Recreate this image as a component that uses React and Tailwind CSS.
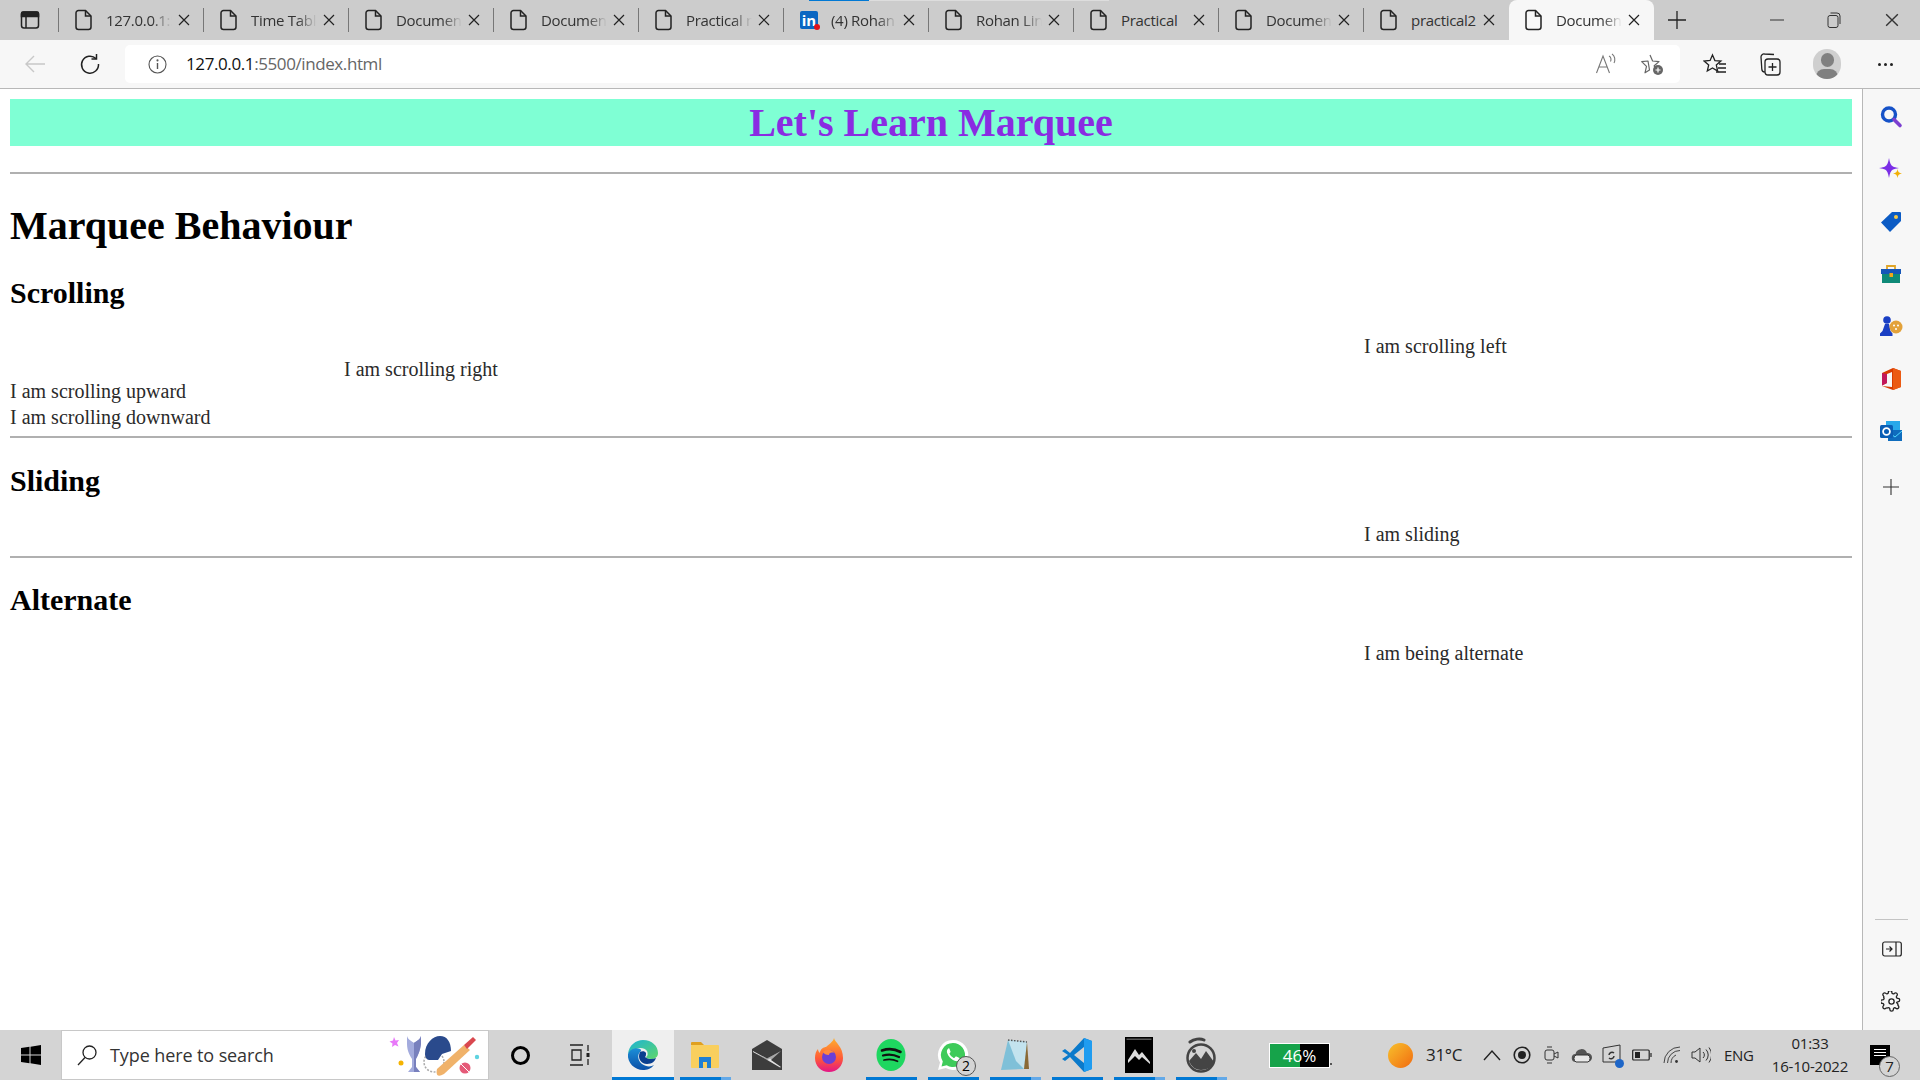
import React from 'react';

const tabs = [
  { title: '127.0.0.1:5500' },
  { title: 'Time Table' },
  { title: 'Document' },
  { title: 'Document' },
  { title: 'Practical no' },
  { title: '(4) Rohan Lin', linkedin: true },
  { title: 'Rohan Linkedin' },
  { title: 'Practical', full: true },
  { title: 'Document' },
  { title: 'practical2', full: true },
];

const PageIcon = () => (
  <svg width="18" height="22" viewBox="0 0 18 22" fill="none" stroke="#222" strokeWidth="1.5" className="shrink-0">
    <path d="M3.5 1.5h7l5.5 5.5v11a2.5 2.5 0 0 1-2.5 2.500h-10a2.5 2.5 0 0 1-2.5-2.500v-14a2.5 2.5 0 0 1 2.5-2.500z" />
    <path d="M10.5 1.5v5.5h5.5" />
  </svg>
);

const LinkedinIcon = () => (
  <div className="relative w-[18px] h-[18px] bg-[#0a66c2] rounded-[2px] shrink-0 flex items-end justify-center">
    <span className="text-white font-bold text-[15px] leading-[17px]">in</span>
    <span className="absolute -right-[2px] -bottom-[1px] w-[6px] h-[6px] rounded-full bg-[#e0101a]" />
  </div>
);

const CloseX = ({ size = 12, color = '#222' }) => (
  <svg width={size} height={size} viewBox="0 0 12 12" stroke={color} strokeWidth="1.2" className="shrink-0">
    <path d="M1 1l10 10M11 1L1 11" />
  </svg>
);

const Tab = ({ tab, active, last }) => (
  <div className={`relative w-[145px] h-[40px] flex items-center pl-[16px] ${active ? 'bg-[#f7f7f7] rounded-t-[8px]' : ''}`}>
    {tab.linkedin ? <LinkedinIcon /> : <PageIcon />}
    <div className={`ml-[13px] w-[66px] overflow-hidden whitespace-nowrap text-[15px] tracking-[-0.3px] text-[#333] ${tab.full ? '' : '[mask-image:linear-gradient(to_right,black_70%,transparent)]'}`}>
      {tab.title}
    </div>
    <div className="ml-[6px]"><CloseX /></div>
    {!active && !last && <div className="absolute right-0 top-[8px] h-[24px] w-px bg-[#777]" />}
  </div>
);

const TabBar = () => (
  <div className="relative h-[40px] bg-[#cccccc] flex items-center shrink-0">
    <div className="w-[59px] h-full relative flex items-center justify-center">
      <svg width="20" height="20" viewBox="0 0 20 20" fill="none" stroke="#222" strokeWidth="1.5" className="mr-[-1px]">
        <rect x="1.5" y="2" width="17" height="16" rx="2.5" />
        <path d="M1.5 3.5a1.5 1.5 0 0 1 1.5-1.5h14a1.5 1.5 0 0 1 1.5 1.5v3h-17z" fill="#222" />
        <path d="M6 6v12" />
      </svg>
      <div className="absolute right-0 top-[8px] h-[24px] w-px bg-[#777]" />
    </div>
    {tabs.map((t, i) => <Tab key={i} tab={t} last={i === tabs.length - 1} />)}
    <Tab tab={{ title: 'Document' }} active />
    <div className="ml-[13px]">
      <svg width="20" height="20" viewBox="0 0 20 20" stroke="#222" strokeWidth="1.3"><path d="M10 1v18M1 10h18" /></svg>
    </div>
    <div className="ml-auto flex items-center h-full">
      <div className="w-[57px] flex justify-center pr-[2px]"><svg width="14" height="14" viewBox="0 0 14 14" stroke="#333" strokeWidth="1"><path d="M0 7h14" /></svg></div>
      <div className="w-[57px] flex justify-center pr-[2px]">
        <svg width="14" height="16" viewBox="0 0 14 16" fill="none" stroke="#333" strokeWidth="1"><rect x="1" y="3.5" width="10" height="12" rx="2" /><path d="M3.5 1h6.5a3 3 0 0 1 3 3v8" /></svg>
      </div>
      <div className="w-[57px] flex justify-center"><CloseX size={14} color="#333" /></div>
    </div>
    {/* page load progress on the linkedin tab */}
    <div className="absolute left-[809px] top-0 h-[1px] w-[60px] bg-[#0078d4]" />
    <div className="absolute left-[869px] top-0 h-[1px] w-[240px] bg-[#dddddd]" />
  </div>
);

const ToolbarBtn = ({ w, children }) => (
  <div className="flex items-center justify-center shrink-0" style={{ width: w }}>{children}</div>
);

const Toolbar = () => (
  <div className="h-[49px] bg-[#f7f7f7] border-b border-[#b8b8b8] flex items-center shrink-0">
    <ToolbarBtn w={69}>
      <svg width="22" height="20" viewBox="0 0 22 20" fill="none" stroke="#c8c8c8" strokeWidth="1.4"><path d="M21 10H2M10 2l-8 8 8 8" /></svg>
    </ToolbarBtn>
    <ToolbarBtn w={42}>
      <svg width="22" height="22" viewBox="0 0 22 22" fill="none" stroke="#222" strokeWidth="1.5"><path d="M17 5.6A8.5 8.5 0 1 0 19.5 11" /><path d="M17.5 1v5h-5" /></svg>
    </ToolbarBtn>
    <div className="ml-[14px] flex-none w-[1555px] h-[38px] bg-white rounded-[5px] flex items-center">
      <div className="ml-[23px]">
        <svg width="19" height="19" viewBox="0 0 19 19" fill="none" stroke="#555" strokeWidth="1.1"><circle cx="9.5" cy="9.5" r="8.5" /><path d="M9.5 8v6" strokeWidth="1.4" /><circle cx="9.5" cy="5.4" r=".5" /></svg>
      </div>
      <div className="ml-[19px] text-[17px] tracking-[-0.4px] text-[#666]"><span className="text-[#111]">127.0.0.1</span>:5500/index.html</div>
      <div className="ml-auto flex items-center">
        <div className="w-[46px] flex justify-center">
          <svg width="22" height="22" viewBox="0 0 22 22" fill="none" stroke="#777" strokeWidth="1.1"><path d="M1.5 20L8 3l6.5 17M4 14h8" /><path d="M14 3c2 1 2.5 3.5 1.5 5.500M17 1c3 2 3.5 6 2 9" /></svg>
        </div>
        <div className="w-[46px] flex justify-center mr-[5px]">
          <svg width="24" height="24" viewBox="0 0 24 24" fill="none" stroke="#666" strokeWidth="1.2">
            <path d="M10 3l2.600 6 6.400.6-4.800 4.200 1 3.200M9.500 18l-4.500 2.800 1.500-6.400L1.700 9.600 8 9z" strokeLinejoin="round" />
            <circle cx="18" cy="18" r="5" fill="#666" stroke="none" />
            <path d="M18 15.500v5M15.500 18h5" stroke="#fff" />
          </svg>
        </div>
      </div>
    </div>
    <ToolbarBtn w={70}>
      <svg width="24" height="22" viewBox="0 0 24 22" fill="none" stroke="#222" strokeWidth="1.3"><path d="M9.5 2l2.400 5.600 6 .5-4.600 4 1.400 6-5.200-3.200L4.300 18l1.400-6-4.600-4 6-.5z" /><path d="M16 11h7M15 15h8M13 19h10" /></svg>
    </ToolbarBtn>
    <ToolbarBtn w={39}>
      <svg width="22" height="24" viewBox="0 0 22 24" fill="none" stroke="#222" strokeWidth="1.3"><rect x="6" y="7" width="15" height="16" rx="3" /><path d="M13.500 11v8M9.500 15h8" /><path d="M15 2.500 5.500 2A3 3 0 0 0 2 5l.8 12a3 3 0 0 0 3 3" /></svg>
    </ToolbarBtn>
    <ToolbarBtn w={76}>
      <div className="relative w-[28px] h-[30px] rounded-full bg-[#cfcfcf] overflow-hidden flex justify-center">
        <div className="absolute top-[4px] w-[13px] h-[14px] rounded-full bg-[#808080]" />
        <div className="absolute top-[20px] w-[22px] h-[16px] rounded-full bg-[#808080]" />
      </div>
    </ToolbarBtn>
    <ToolbarBtn w={40}>
      <div className="flex gap-[3px]">
        <span className="w-[3px] h-[3px] rounded-full bg-[#222]" />
        <span className="w-[3px] h-[3px] rounded-full bg-[#222]" />
        <span className="w-[3px] h-[3px] rounded-full bg-[#222]" />
      </div>
    </ToolbarBtn>
  </div>
);

const SideSlot = ({ children }) => (
  <div className="h-[52.3px] flex items-center justify-center shrink-0 pr-[1px]">{children}</div>
);

const Sidebar = () => (
  <div className="w-[58px] shrink-0 bg-[#f7f7f7] border-l border-[#b8b8b8] flex flex-col pt-[2px]">
    <SideSlot>
      <svg width="24" height="24" viewBox="0 0 24 24" fill="none"><circle cx="10" cy="9.5" r="6.5" stroke="#1652c8" strokeWidth="3.4" /><path d="M15 14.500l6 6" stroke="#7c3fd0" strokeWidth="3.6" strokeLinecap="round" /></svg>
    </SideSlot>
    <SideSlot>
      <svg width="24" height="24" viewBox="0 0 24 24"><path d="M10 1c.8 5 2 7.500 4 8.500 1 .5 3 1 6 1.500-3 .5-5 1-6 1.500-2 1-3.200 3.500-4 8.500-.8-5-2-7.500-4-8.500-1-.5-3-1-6-1.500 3-.5 5-1 6-1.500 2-1 3.200-3.500 4-8.500z" fill="#7b2ee6" /><path d="M18.500 12c.5 3 1.500 4 4.500 4.500-3 .5-4 1.500-4.500 4.500-.5-3-1.500-4-4.500-4.500 3-.5 4-1.500 4.500-4.500z" fill="#f2b006" /></svg>
    </SideSlot>
    <SideSlot>
      <svg width="22" height="22" viewBox="0 0 22 22"><path d="M12 1h8a1 1 0 0 1 1 1v8L10 21 1 11.500z" fill="#0b5bc4" /><circle cx="16" cy="6" r="2" fill="#f6c944" /></svg>
    </SideSlot>
    <SideSlot>
      <svg width="22" height="20" viewBox="0 0 22 20" fill="none"><path d="M7 5V2h8v3" stroke="#e0a528" strokeWidth="1.800" /><rect x="1" y="5" width="20" height="5" fill="#1657b8" /><rect x="2" y="10" width="18" height="9" fill="#0f8a78" /><rect x="9.500" y="9" width="3.500" height="4" fill="#f0a818" /></svg>
    </SideSlot>
    <SideSlot>
      <svg width="24" height="22" viewBox="0 0 24 22"><circle cx="8" cy="5" r="3.800" fill="#1a3fc4" /><path d="M6 9h4l1.500 7 2 2.500v2.500H1v-2.500l2.500-2.500z" fill="#1a3fc4" /><circle cx="17" cy="12" r="6.500" fill="#e3a23a" /><circle cx="15" cy="10.500" r="1" fill="#fff" /><circle cx="19" cy="10.500" r="1" fill="#fff" /><circle cx="17" cy="14" r="1" fill="#fff" /></svg>
    </SideSlot>
    <SideSlot>
      <svg width="22" height="24" viewBox="0 0 22 24"><path d="M13 1l8 3v16l-8 3-11-4 10 1V5L7 7v9l-5 2.500V6z" fill="#d83b01" /><path d="M2 6l5 1v9l-5 2.500z" fill="#c2185b" /><path d="M13 1l8 3v16l-8 3z" fill="#eb5a13" /></svg>
    </SideSlot>
    <SideSlot>
      <svg width="22" height="22" viewBox="0 0 22 22"><rect x="6" y="1" width="14" height="10" fill="#28a8ea" /><path d="M8 10h14v11H8z" fill="#0f6cbd" /><path d="M8 12l7 5 7-6" fill="none" stroke="#50d9ff" strokeWidth="1" /><rect x="0" y="5" width="13" height="13" rx="1.500" fill="#0a5eb5" /><circle cx="6.500" cy="11.500" r="3.400" fill="none" stroke="#fff" strokeWidth="1.800" /></svg>
    </SideSlot>
    <div className="h-[52.3px] flex items-center justify-center shrink-0 pr-[1px] mt-[4px]">
      <svg width="16" height="16" viewBox="0 0 16 16" stroke="#333" strokeWidth="1.100"><path d="M8 0v16M0 8h16" /></svg>
    </div>
    <div className="mt-auto mx-[12px] h-px bg-[#c4c4c4]" />
    <div className="h-[52px] flex items-center justify-center shrink-0 mt-[3px]">
      <svg width="20" height="16" viewBox="0 0 20 16" fill="none" stroke="#222" strokeWidth="1.200"><rect x=".7" y="1" width="18.600" height="14" rx="2" /><path d="M14 1v14" /><path d="M4 8h6M7.500 5.500 10 8l-2.500 2.500" /></svg>
    </div>
    <div className="h-[52px] flex items-center justify-center shrink-0 mb-[3px]">
      <svg width="21" height="21" viewBox="0 0 24 24" fill="none" stroke="#222" strokeWidth="1.500"><circle cx="12" cy="12" r="3" /><path d="M19.400 15a1.650 1.650 0 0 0 .33 1.820l.06.060a2 2 0 1 1-2.830 2.830l-.06-.060a1.650 1.650 0 0 0-2.800 1.170V21a2 2 0 0 1-4 0v-.090A1.650 1.650 0 0 0 7.400 19.400a1.650 1.650 0 0 0-1.820.330l-.060.060a2 2 0 1 1-2.830-2.830l.060-.060a1.650 1.650 0 0 0-1.170-2.800H1.500a2 2 0 0 1 0-4h.090A1.650 1.650 0 0 0 3.100 7.400a1.650 1.650 0 0 0-.330-1.820l-.060-.060a2 2 0 1 1 2.830-2.830l.060.060a1.650 1.650 0 0 0 2.800-1.170V1.500a2 2 0 0 1 4 0v.090a1.650 1.650 0 0 0 2.800 1.170l.060-.060a2 2 0 1 1 2.830 2.830l-.060.060a1.650 1.650 0 0 0 1.170 2.800h.2a2 2 0 0 1 0 4h-.090a1.650 1.650 0 0 0-1.510 1z" /></svg>
    </div>
  </div>
);

const Page = () => (
  <div className="flex-1 min-w-0 bg-white px-[10px] pt-[10px] text-black [font-family:'Liberation_Serif',serif]">
    <h1 className="h-[47px] bg-[#7fffd4] text-center text-[40px] leading-[47px] font-bold text-[#8a2be2]">Let's Learn Marquee</h1>
    <hr className="mt-[26px] border-0 h-[2px] bg-[#b0b0b0]" />
    <h1 className="mt-[29px] text-[40px] leading-[46px] font-bold">Marquee Behaviour</h1>
    <h2 className="mt-[26px] text-[30px] leading-[35px] font-bold">Scrolling</h2>
    <div className="mt-[25px] text-[20px] leading-[23px] text-[#2a2a2a]">
      <div className="pl-[1354px]">I am scrolling left</div>
      <div className="pl-[334px]">I am scrolling right</div>
      <div className="-mt-[1px]">I am scrolling upward</div>
      <div className="mt-[3px]">I am scrolling downward</div>
    </div>
    <hr className="mt-[7px] border-0 h-[2px] bg-[#b0b0b0]" />
    <h2 className="mt-[26px] text-[30px] leading-[34px] font-bold">Sliding</h2>
    <div className="mt-[25px] pl-[1354px] text-[20px] leading-[23px] text-[#2a2a2a]">I am sliding</div>
    <hr className="mt-[10px] border-0 h-[2px] bg-[#b0b0b0]" />
    <h2 className="mt-[25px] text-[30px] leading-[34px] font-bold">Alternate</h2>
    <div className="mt-[25px] pl-[1354px] text-[20px] leading-[23px] text-[#2a2a2a]">I am being alternate</div>
  </div>
);

const CricketArt = () => (
  <svg width="94" height="44" viewBox="0 0 94 44" className="shrink-0">
    <path d="M6 4l1.500 3.500 3.500-.5-2 3 1.500 3.500-3.500-1.500-3 2 .5-3.500-3-2 3.500-1z" fill="#e879f9" />
    <circle cx="13" cy="30" r="2.500" fill="#f5b301" />
    <path d="M19 3c1 4 5 5 7 7 2-2 6-3 7-7v8c-1 8-4 13-5 15v8l4 5H20l4-5v-8c-1-2-5-7-5-15z" fill="#a3abdd" />
    <path d="M26 10c2-2 6-3 7-7v8c-1 8-4 13-5 15v8l4 5h-6z" fill="#7880bd" />
    <circle cx="46" cy="29" r="10" fill="none" stroke="#aaaaaa" strokeWidth="1.500" strokeDasharray="2 1.500" />
    <path d="M37 21c0-11 8-18 15-18s11 6 11 15l-9 3-4 6h-9c-2 0-4-3-4-6z" fill="#2a4a8c" />
    <path d="M49 36l27-24 6 5-26 24q-9 5-7-5z" fill="#f0b26a" />
    <path d="M76 12l9-8 3 3-9 9z" fill="#d9484f" />
    <circle cx="77" cy="35" r="5.500" fill="#e55a78" />
    <path d="M73 31l8 8" stroke="#fff" strokeWidth="1" />
    <circle cx="89" cy="24" r="2.200" fill="#5fd3e0" />
  </svg>
);

const EdgeIcon = () => (
  <svg width="32" height="32" viewBox="0 0 32 32">
    <defs>
      <linearGradient id="edgeA" x1="0" y1="0" x2="1" y2="1"><stop offset="0" stopColor="#1bb3d6" /><stop offset="1" stopColor="#5fd76a" /></linearGradient>
      <linearGradient id="edgeB" x1="0" y1="0" x2="0" y2="1"><stop offset="0" stopColor="#1c8fd8" /><stop offset="1" stopColor="#0b4fa6" /></linearGradient>
    </defs>
    <path d="M1 15C2 6 9 1 16 1c9 0 15 6 15 13 0 4-3 6-7 6-3 0-5-1-5-2 2-1 2-4 1-6-2-3-7-4-11-2-4 1-7 3-8 5z" fill="url(#edgeA)" />
    <path d="M1 15c2-5 8-7 12-5 2 1 1 2 0 3-3 3-2 9 2 12 4 3 9 3 12 1-3 4-7 5-11 5C8 31 0 24 1 15z" fill="url(#edgeB)" />
    <path d="M13 13c2-1 5-1 6 1 0 2 0 3-1 4 2 2 7 3 11 1-1 3-4 6-9 6-6 0-10-6-7-12z" fill="#0a3f8f" />
  </svg>
);

const FilesIcon = () => (
  <svg width="30" height="28" viewBox="0 0 30 28">
    <path d="M1 2a1 1 0 0 1 1-1h9l3 3h-13z" fill="#e0a020" />
    <rect x="1" y="4" width="28" height="23" rx="1" fill="#f9cf5e" />
    <path d="M9 27V16h12v11h-4v-6h-4v6z" fill="#1f7fd4" />
  </svg>
);

const MailIcon = () => (
  <svg width="30" height="32" viewBox="0 0 30 32">
    <path d="M15 1L30 10v21H0V10z" fill="#3d3d3d" />
    <path d="M3 10.500L15 3.500l12 7v1.500L15 18 3 12z" fill="#3d3d3d" />
    <path d="M1 12l14 7.500L29 12l-10 9 10 7-1 .5-12-7L1 13z" fill="#e2e2e2" />
    <path d="M0 13l15 8 3-1.500L29 27V12L15 19.500z" fill="#3d3d3d" opacity="0.35" />
  </svg>
);

const FirefoxIcon = () => (
  <svg width="30" height="36" viewBox="0 0 30 36">
    <defs>
      <linearGradient id="ffA" x1="0" y1="0" x2="0" y2="1"><stop offset="0" stopColor="#ffb02e" /><stop offset="0.6" stopColor="#ff5a36" /><stop offset="1" stopColor="#e31587" /></linearGradient>
    </defs>
    <path d="M20 1c1 5 9 8 9 20 0 8-6 14-14 14S1 29 1 21c0-4 1-7 3-9 0 2 1 3 2 4 0-4 4-6 6-6 3-3 7-5 8-9z" fill="url(#ffA)" />
    <circle cx="15" cy="20" r="7" fill="#6b3fd4" />
    <path d="M9 15c3-3 9-3 11 1-3-1-5 0-5 2-3 0-5-1-6-3z" fill="#ff8a3c" />
  </svg>
);

const SpotifyIcon = () => (
  <svg width="30" height="32" viewBox="0 0 30 32">
    <ellipse cx="15" cy="16" rx="14.500" ry="16" fill="#1ed760" />
    <g fill="none" stroke="#111" strokeLinecap="round">
      <path d="M6 11.500c6-2 13-1.500 18.500 1.500" strokeWidth="2.600" />
      <path d="M7 16.500c5-1.500 11-1 16 1.500" strokeWidth="2.200" />
      <path d="M8 21c4-1 9-1 13.500 1.200" strokeWidth="1.800" />
    </g>
  </svg>
);

const WhatsappIcon = () => (
  <div className="relative">
    <svg width="32" height="32" viewBox="0 0 32 32">
      <path d="M16 1A15 15 0 0 0 3 23.500L1 31l7.800-2A15 15 0 1 0 16 1z" fill="#fff" />
      <path d="M16 4A12 12 0 0 0 5.800 22.400L4.500 27.500l5.200-1.300A12 12 0 1 0 16 4z" fill="#3ecb5a" />
      <path d="M11.500 9.500c-1 .5-2 2-1.500 4 1 3.500 4.500 7.500 8.500 8.500 2 .5 3.500-.5 4-2 .2-.8 0-1-.5-1.300l-2.500-1.200c-.5-.2-.8-.1-1.100.3l-.8 1c-.3.3-.5.3-1 .1-1.800-.8-3-2-4-3.800-.2-.4-.2-.6.1-.9l.7-.9c.2-.3.2-.6.100-.9l-1-2.500c-.2-.5-.6-.6-1.100-.5z" fill="#fff" />
    </svg>
    <div className="absolute left-[19px] top-[17px] w-[20px] h-[20px] rounded-full border border-[#555] bg-[#d4d4d4] text-black text-[14px] leading-[18px] text-center">2</div>
  </div>
);

const NotepadIcon = () => (
  <svg width="30" height="34" viewBox="0 0 30 34">
    <path d="M8 2l19 2-3 27-23 1z" fill="#7fc0d8" />
    <path d="M8 2l19 2-3 27-8-8z" fill="#c3e3ee" />
    <path d="M27 4l2 27-5 0z" fill="#8a6a35" />
    <path d="M8 2l19 2" stroke="#555" strokeWidth="1.500" strokeDasharray="1.500 1.500" />
  </svg>
);

const VscodeIcon = () => (
  <svg width="30" height="36" viewBox="0 0 30 36">
    <path d="M22 1L8 16l-5-4-3 2 6 4-6 4 3 2 5-4 14 15 8-3V4z" fill="#0a7acb" />
    <path d="M22 1l8 3v28l-8 3z" fill="#1f9cf0" />
    <path d="M22 10L12 18l10 8z" fill="#d4d4d4" />
  </svg>
);

const PhotosIcon = () => (
  <svg width="28" height="36" viewBox="0 0 28 36">
    <rect width="28" height="36" fill="#000" />
    <rect x="1.500" y="1.500" width="25" height="1.500" fill="#555" />
    <path d="M3 23l7-11 4 6 3-3 8 10v2H3z" fill="#ddd" />
    <path d="M3 26l7-7 4 4 3-3 8 7v3H3z" fill="#000" />
  </svg>
);

const CircleMountain = () => (
  <svg width="32" height="36" viewBox="0 0 32 36">
    <path d="M5 5c4-3 10-4 14-2" fill="none" stroke="#444" strokeWidth="3" strokeLinecap="round" />
    <circle cx="16" cy="21" r="13.500" fill="none" stroke="#444" strokeWidth="2.500" />
    <path d="M4 24l7-8 5 6 5-8 8 11c-2 5-7 8-13 8S6 29 4 24z" fill="#444" />
    <circle cx="9" cy="14" r="2" fill="#444" />
  </svg>
);

const apps = [
  { icon: <EdgeIcon />, active: true },
  { icon: <FilesIcon />, bar: 41 },
  { icon: <MailIcon /> },
  { icon: <FirefoxIcon /> },
  { icon: <SpotifyIcon />, bar: 51 },
  { icon: <WhatsappIcon />, bar: 51 },
  { icon: <NotepadIcon />, bar: 41 },
  { icon: <VscodeIcon />, bar: 51 },
  { icon: <PhotosIcon />, bar: 41 },
  { icon: <CircleMountain />, bar: 41 },
];

const AppSlot = ({ app }) => (
  <div className={`relative w-[62px] h-full flex items-center justify-center ${app.active ? 'bg-[#efefef]' : ''}`}>
    {app.icon}
    {app.active && <div className="absolute bottom-0 inset-x-0 h-[3px] bg-[#0078d4]" />}
    {app.bar && (
      <div className="absolute bottom-0 left-[6px] w-[51px] h-[3px] bg-[#63a9e8]">
        <div className="h-full bg-[#0078d4]" style={{ width: app.bar }} />
      </div>
    )}
  </div>
);

const TrayIcon = ({ w = 30, children }) => (
  <div className="flex items-center justify-center shrink-0" style={{ width: w }}>{children}</div>
);

const Tray = () => (
  <div className="flex items-center h-full">
    <div className="ml-[37px] relative w-[61px] h-[25px] bg-black border border-white flex shrink-0">
      <div className="w-[30px] h-full bg-[#16a34a]" />
      <span className="absolute inset-0 text-center text-white text-[17px] leading-[23px]">46%</span>
      <span className="absolute -right-[3px] bottom-[2px] w-[2px] h-[2px] bg-[#555]" />
    </div>
    <div className="ml-[58px] w-[25px] h-[25px] rounded-full bg-gradient-to-br from-[#f6c02c] to-[#f0690f] shrink-0" />
    <div className="ml-[13px] w-[42px] text-[17px] text-[#222] tracking-[-0.3px] whitespace-nowrap">31°C</div>
    <div className="ml-[9px] flex items-center">
      <TrayIcon>
        <svg width="18" height="12" viewBox="0 0 18 12" fill="none" stroke="#222" strokeWidth="1.400"><path d="M1 11l8-9 8 9" /></svg>
      </TrayIcon>
      <TrayIcon>
        <svg width="18" height="18" viewBox="0 0 18 18" fill="none"><circle cx="9" cy="9" r="7.800" stroke="#222" strokeWidth="1.600" /><circle cx="9" cy="9" r="4" fill="#222" /></svg>
      </TrayIcon>
      <TrayIcon>
        <svg width="16" height="20" viewBox="0 0 16 20" fill="none" stroke="#333" strokeWidth="1"><rect x="1" y="5" width="9" height="10" rx="2" /><path d="M10 9l4-2v6l-4-2M3 2h5M3 18h5" /></svg>
      </TrayIcon>
      <TrayIcon>
        <svg width="22" height="16" viewBox="0 0 22 16"><path d="M5 15a4 4 0 0 1-.5-8A6 6 0 0 1 16 6a4.500 4.500 0 0 1 1 9z" fill="#555" /><path d="M5 15a4 4 0 0 1 0-7h12a4 4 0 0 1 0 7z" fill="#e8e8e8" stroke="#333" /></svg>
      </TrayIcon>
      <TrayIcon>
        <div className="relative">
          <svg width="20" height="22" viewBox="0 0 20 22" fill="none" stroke="#333" strokeWidth="1"><path d="M1 4l17-3v17H1z" /><path d="M7 11a3 3 0 0 1 5-2M12 12a3 3 0 0 1-5 2" strokeWidth="1.500" /></svg>
          <span className="absolute right-[-2px] bottom-[-2px] w-[9px] h-[9px] rounded-full bg-[#1e66c8]" />
        </div>
      </TrayIcon>
      <TrayIcon>
        <svg width="20" height="12" viewBox="0 0 20 12" fill="none" stroke="#222" strokeWidth="1.200"><rect x=".7" y="1" width="16.500" height="10" rx="1" /><rect x="3" y="3" width="5" height="6" fill="#222" stroke="none" /><path d="M19 4v4" /></svg>
      </TrayIcon>
      <TrayIcon>
        <svg width="18" height="18" viewBox="0 0 18 18" fill="none" stroke="#444" strokeWidth="1"><path d="M1 17A16 16 0 0 1 17 1M4.500 17A12.500 12.500 0 0 1 17 4.500M8 17a9 9 0 0 1 5-8" /><circle cx="13.500" cy="15.500" r="1.400" fill="#333" stroke="none" /></svg>
      </TrayIcon>
      <TrayIcon w={28}>
        <svg width="20" height="18" viewBox="0 0 20 18" fill="none" stroke="#333" strokeWidth="1"><path d="M1 6h3l5-4v14l-5-4H1z" /><path d="M12 6a4 4 0 0 1 0 6M15 3.500a8 8 0 0 1 0 11M18 1.500a12 12 0 0 1 0 15" /></svg>
      </TrayIcon>
    </div>
    <div className="ml-[9px] w-[32px] text-[15px] text-[#222] tracking-[-0.3px]">ENG</div>
    <div className="ml-[9px] w-[90px] text-center text-[15px] leading-[23px] text-[#222] tracking-[-0.2px]">
      <div>01:33</div>
      <div>16-10-2022</div>
    </div>
    <div className="ml-[15px] relative w-[20px] h-[20px] bg-black shrink-0 flex flex-col gap-[2px] pt-[4px] px-[4px]">
      <span className="h-px bg-white" />
      <span className="h-px bg-white" />
      <span className="h-px bg-white" />
      <div className="absolute left-[9px] top-[11px] w-[21px] h-[21px] rounded-full border border-[#666] bg-[#d4d4d4] text-[#222] text-[15px] leading-[19px] text-center">7</div>
    </div>
  </div>
);

const Taskbar = () => (
  <div className="h-[50px] bg-[#d4d4d4] flex items-center shrink-0 text-[#222]">
    <div className="w-[61px] flex justify-center">
      <svg width="20" height="20" viewBox="0 0 20 20" fill="#000"><path d="M0 3l8.500-1.200v7.700H0zM9.500 1.700L20 0v9.500H9.500zM0 10.500h8.500v7.700L0 17zM9.500 10.500H20V20L9.500 18.300z" /></svg>
    </div>
    <div className="w-[428px] h-[50px] bg-white border border-[#c8c8c8] flex items-center shrink-0">
      <div className="ml-[15px]">
        <svg width="20" height="21" viewBox="0 0 20 21" fill="none" stroke="#222" strokeWidth="1.300"><circle cx="12.500" cy="7.500" r="6.500" /><path d="M8 12.500L1 20" /></svg>
      </div>
      <div className="ml-[13px] text-[18px] text-[#333] tracking-[-0.1px] whitespace-nowrap">Type here to search</div>
      <div className="ml-auto mr-[6px]"><CricketArt /></div>
    </div>
    <div className="w-[62px] flex justify-center shrink-0">
      <div className="w-[19px] h-[19px] rounded-full border-[3px] border-black" />
    </div>
    <div className="w-[58px] flex justify-center shrink-0">
      <svg width="22" height="22" viewBox="0 0 22 22" fill="none" stroke="#222" strokeWidth="1.300"><path d="M1 1h13M1 21h13M3 6h9v10H3zM19 1v6M19 15v6" /><rect x="17.500" y="9" width="3" height="4" fill="#222" stroke="none" /></svg>
    </div>
    <div className="ml-[3px] flex items-center h-full">
      {apps.map((a, i) => <AppSlot key={i} app={a} />)}
    </div>
    <Tray />
  </div>
);

export default function App() {
  return (
    <div className="w-full h-screen overflow-hidden flex flex-col bg-white [font-family:'Open_Sans',sans-serif]">
      <TabBar />
      <Toolbar />
      <div className="flex-1 min-h-0 flex">
        <Page />
        <Sidebar />
      </div>
      <Taskbar />
    </div>
  );
}
